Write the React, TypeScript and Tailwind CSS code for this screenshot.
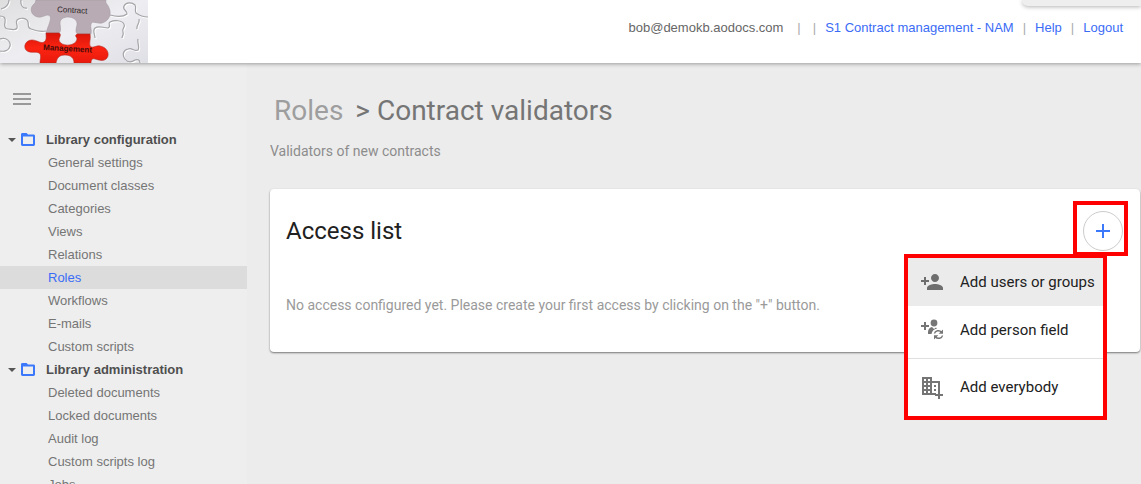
import React, { useState } from "react";
import { MdAdd, MdPersonAdd } from "react-icons/md";

const sections = [
  {
    title: "Library configuration",
    items: [
      "General settings",
      "Document classes",
      "Categories",
      "Views",
      "Relations",
      "Roles",
      "Workflows",
      "E-mails",
      "Custom scripts",
    ],
  },
  {
    title: "Library administration",
    items: [
      "Deleted documents",
      "Locked documents",
      "Audit log",
      "Custom scripts log",
      "Jobs",
    ],
  },
];

const PuzzleLogo = () => (
  <svg width="148" height="63" viewBox="0 0 148 63" role="img" aria-label="Contract Management">
    <defs>
      <linearGradient id="paper" x1="0" y1="0" x2="1" y2="1">
        <stop offset="0" stopColor="#dfdedf" />
        <stop offset="0.5" stopColor="#eeedf1" />
        <stop offset="1" stopColor="#dfe0e6" />
      </linearGradient>
      <linearGradient id="red" x1="0" y1="0" x2="0" y2="1">
        <stop offset="0" stopColor="#d81408" />
        <stop offset="0.5" stopColor="#fb2412" />
        <stop offset="1" stopColor="#e9190c" />
      </linearGradient>
      <g id="seams">
        <path d="M0 16c4 0 6 2 5 6c-1 4 0 7 3 7c4 0 8 2 9-1c1-3-2-5 0-8c3-3 10-2 11 2c1 4-1 6 3 7c5 2 10 3 15 2" />
        <path d="M1 9c5-1 8-5 8-9M21 0c-1 5 2 9 6 8" />
        <path d="M0 39c6-2 11 2 10 7c-1 4-5 6-10 5" />
        <path d="M110 15c7 2 13 2 17-1c1-3-5-4-3-8c2-4 8-4 11-1c2 3-1 5 1 8c4 3 8 4 12 4" />
        <path d="M95 38c0-4-3-7 0-10c4-3 8 0 13 0c4-2-1-4 2-6c4-2 12-2 14 2c2 3-3 5-1 8c1 3-1 4-1 6" />
        <path d="M139 19c1 5-3 6-2 10M138 39c-1 4 2 8 0 11c-4 2-6-3-10-1c-5 1-6 6-3 10c3 4 7 3 10 1c3-1 5 0 5 3" />
      </g>
    </defs>
    <rect width="148" height="63" fill="url(#paper)" />
    <g fill="none" strokeWidth="1.2">
      <use href="#seams" stroke="#ffffff" transform="translate(1 1)" />
      <use href="#seams" stroke="#a5a4a8" />
    </g>
    <path
      d="M36 0c-1 2 0 3-2 4c-5 4-3 12 4 13c5 1 9-4 12-1c2 3-2 10-4 17h12c4 0 2-7 2-10c0-4 4-6 8-6c5 0 10 3 9 8c-1 4-2 8 1 9h13c1-4-1-7 0-10c1-4 6 0 11-1c7-2 10-9 7-15c-1-4-4-4-3-8Z"
      fill="#b9abb3"
      stroke="#a39aa1"
      strokeWidth="0.6"
    />
    <path
      d="M46 33h13c3 1 0 5 0 7c1 7 17 7 18-1c0-2-3-3 0-5h13c1 5-1 8 0 12c3 3 6-1 10 0c7 1 10 8 7 12c-3 4-8 2-12 1c-3-1-4 1-4 4H74c0-5-3-8-9-8c-6 0-8 3-9 8H40c0-4 2-8-1-10c-3-2-9 1-13-3c-3-4 0-10 6-10c5 0 9 4 12 2c3-2 2-5 2-9Z"
      fill="url(#red)"
      stroke="#b12a22"
      strokeWidth="0.6"
    />
    <text x="57" y="12" fontSize="8" fill="#2b2629" transform="rotate(3 57 12)" fontFamily="Liberation Sans, sans-serif">
      Contract
    </text>
    <text x="43" y="50" fontSize="8" fontWeight="700" fill="#4a0a08" transform="rotate(3 43 50)" fontFamily="Liberation Sans, sans-serif">
      Management
    </text>
  </svg>
);

const FolderIcon = () => (
  <svg width="14" height="13" viewBox="0 0 14 13" aria-hidden="true">
    <path
      fillRule="evenodd"
      d="M1.4 0h4.2L7 1.6h5.6c.8 0 1.4.6 1.4 1.4v8.6c0 .8-.6 1.4-1.4 1.4H1.4C.6 13 0 12.4 0 11.6V1.4C0 .6.6 0 1.4 0ZM2 3.6V11h10V3.6Z"
      fill="#3b78fb"
    />
  </svg>
);

const PersonFieldIcon = () => (
  <svg width="24" height="24" viewBox="0 0 24 24" fill="#757575" aria-hidden="true">
    <path d="M4 4h2v3h3v2H6v3H4V9H1V7h3Z" />
    <circle cx="14" cy="5" r="3.4" />
    <path d="M8 16v-2c0-3 2-4.500 4-5l2 2 2-1.500 1 1c-3 .5-5 2.500-5.500 5.500Z" />
    <g fill="none" stroke="#757575" strokeWidth="1.500">
      <path d="M14.500 15.500c.5-3 5-4 7-1.200M22.500 17.500c-.5 3-5 4-7 1.200" />
    </g>
    <path d="M23 11.500v4.300h-4.300ZM14 21.500v-4.300h4.300Z" />
  </svg>
);

const EverybodyIcon = () => (
  <svg width="24" height="24" viewBox="0 0 24 24" fill="#757575" aria-hidden="true">
    <path
      fillRule="evenodd"
      d="M2 2h10v4h8v10h-2V8h-6v10h4v2H2ZM4 4v2h2V4ZM8 4v2h2V4ZM4 8v2h2V8ZM8 8v2h2V8ZM4 12v2h2v-2ZM8 12v2h2v-2ZM4 16v2h2v-2ZM8 16v2h2v-2Z"
    />
    <path d="M14 10h2v2h-2ZM14 14h2v2h-2ZM18 16h2v3h3v2h-3v3h-2v-3h-3v-2h3Z" />
  </svg>
);

const Header = () => (
  <header className="relative z-10 flex h-[63px] shrink-0 items-start justify-between bg-white shadow-[0_1px_4px_rgba(0,0,0,0.35)]">
    <PuzzleLogo />
    <nav className="flex pt-[18px] pr-[18px] text-[13px] leading-5 text-[#3b6cf6]">
      <span className="mr-3.5 text-[#666]">bob@demokb.aodocs.com</span>
      <span className="mr-3 text-[#aaa]">|</span>
      <span className="mr-[9px] text-[#aaa]">|</span>
      <a href="#library">S1 Contract management - NAM</a>
      <span className="mx-[9px] text-[#aaa]">|</span>
      <a href="#help">Help</a>
      <span className="mx-[9px] text-[#aaa]">|</span>
      <a href="#logout">Logout</a>
    </nav>
    <div className="absolute top-0 right-0 h-1.5 w-[119px] rounded-bl-lg bg-[#eee] shadow-[0_1px_4px_rgba(0,0,0,0.3)]" />
  </header>
);

const Sidebar = () => {
  const [selected, setSelected] = useState("Roles");

  return (
    <aside className="w-[247px] shrink-0 pt-[30px] text-[13px] leading-[23px] text-[#757575]">
      <button aria-label="Toggle menu" className="ml-[13px] block h-[12px] w-[18px]">
        <svg width="18" height="12" viewBox="0 0 18 12" fill="#999">
          <path d="M0 0h18v2H0ZM0 5h18v2H0ZM0 10h18v2H0Z" />
        </svg>
      </button>
      <nav className="mt-[23px]">
        {sections.map((section) => (
          <div key={section.title}>
            <button className="flex h-[23px] w-full items-center pl-2 font-bold text-[#4f4f4f]">
              <svg width="8" height="4" viewBox="0 0 8 4" fill="#555" className="mr-[5px]">
                <path d="M0 0h8L4 4Z" />
              </svg>
              <FolderIcon />
              <span className="ml-[11px]">{section.title}</span>
            </button>
            <ul>
              {section.items.map((item) => (
                <li key={item}>
                  <a
                    href="#item"
                    onClick={() => setSelected(item)}
                    className={
                      item === selected
                        ? "block bg-[#dcdcdc] pl-12 text-[#3b6cf6]"
                        : "block pl-12"
                    }
                  >
                    {item}
                  </a>
                </li>
              ))}
            </ul>
          </div>
        ))}
      </nav>
    </aside>
  );
};

const AddMenu = () => (
  <div className="absolute top-[49px] right-[17px] w-[203px] border-4 border-[#f00] bg-white text-[15px] text-[#212121]">
    <button className="flex h-12 w-full items-center gap-4 bg-[#ebebeb] pl-3 whitespace-nowrap">
      <MdPersonAdd size={24} color="#6e6e6e" />
      Add users or groups
    </button>
    <button className="flex h-12 w-full items-center gap-4 pl-3 whitespace-nowrap">
      <PersonFieldIcon />
      Add person field
    </button>
    <hr className="my-1 border-[#e0e0e0]" />
    <button className="flex h-12 w-full items-center gap-4 pl-3 whitespace-nowrap">
      <EverybodyIcon />
      Add everybody
    </button>
    <div className="h-[5px]" />
  </div>
);

const AccessList = () => {
  const [open, setOpen] = useState(true);

  return (
    <section className="mt-7 mr-px rounded-sm bg-white pb-[37px] shadow-[0_1px_2px_rgba(0,0,0,0.5)]">
      <div className="flex items-start justify-between pt-3 pr-3 pl-4">
        <h2 className="pt-3.5 text-2xl leading-8 text-[#212121]">Access list</h2>
        <div className="relative border-4 border-[#f00] pt-1.5 pr-px pb-px pl-1.5">
          <button
            aria-label="Add access"
            onClick={() => setOpen((prev) => !prev)}
            className="flex size-10 items-center justify-center rounded-full border border-[#ccc]"
          >
            <MdAdd size={24} color="#3b78fb" />
          </button>
          {open && <AddMenu />}
        </div>
      </div>
      <p className="mt-[39px] px-4 text-sm leading-5 text-[#9a9a9a]">
        No access configured yet. Please create your first access by clicking on the "+" button.
      </p>
    </section>
  );
};

export default function App() {
  return (
    <div className="flex h-screen flex-col overflow-hidden bg-[#eee] font-['Liberation_Sans',Arial,sans-serif]">
      <Header />
      <div className="flex min-h-0 flex-1">
        <Sidebar />
        <main className="min-w-0 flex-1 bg-[#ececec] pl-[23px] font-[Roboto,sans-serif]">
          <h1 className="flex gap-3 pt-7 pl-1 text-[28px] leading-10 text-[#757575]">
            <a href="#roles" className="text-[#9e9e9e]">
              Roles
            </a>
            <span>&gt; Contract validators</span>
          </h1>
          <p className="mt-2.5 text-sm leading-5 text-[#8c8c8c]">Validators of new contracts</p>
          <AccessList />
        </main>
      </div>
    </div>
  );
}
